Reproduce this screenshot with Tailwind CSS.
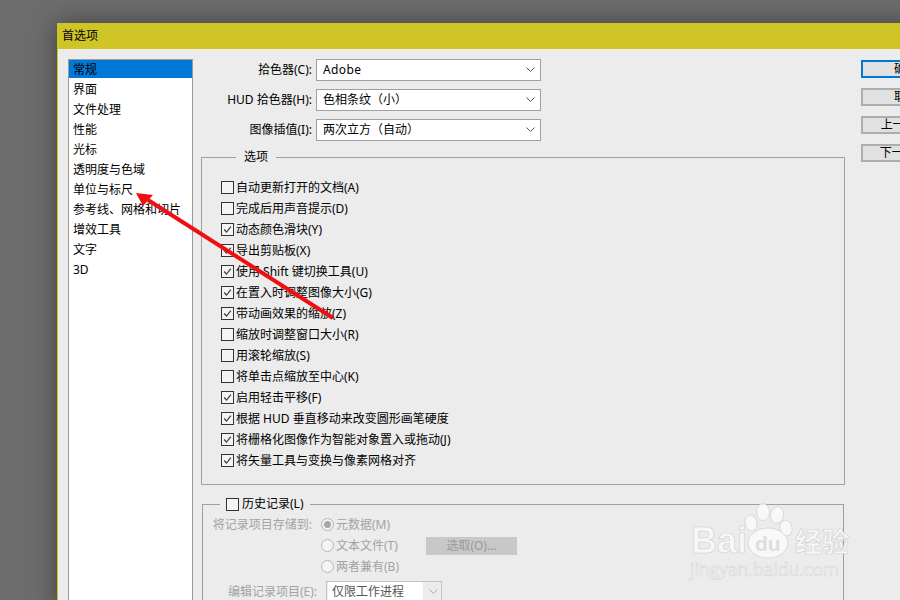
<!DOCTYPE html>
<html lang="zh-CN">
<head>
    <meta charset="UTF-8">
    <title>首选项</title>
    <script src="https://cdn.jsdelivr.net/npm/@tailwindcss/browser@4"></script>
</head>
<body class="relative h-[600px] w-[900px] overflow-hidden bg-[#6c6c6c] pt-[23px] pl-[57px] font-['Noto_Sans','Noto_Sans_CJK_SC',sans-serif] text-[12px] text-black">
    <svg class="hidden">
        <symbol id="check" viewBox="0 0 13 13">
            <path d="M2.5 6.5 L5.3 9.5 L10.5 3" fill="none" stroke="#444" stroke-width="1.5"/>
        </symbol>
    </svg>

    <!-- Dialog -->
    <div class="w-[920px] border-l border-[#cfc527] bg-[#ececec] shadow-[0_0_22px_rgba(0,0,0,0.4)]">
        <div class="flex h-[26px] items-center bg-[#cfc527] pl-[4px] text-[12px]">首选项</div>

        <div class="flex h-[560px] pt-[10px] pl-[10px]">
            <!-- Category list -->
            <ul class="h-[600px] w-[125px] shrink-0 border border-[#9a9a9a] bg-white leading-[20px]">
                <li class="mb-[2px] h-[18px] bg-[#0078d7] pl-[4px]">常规</li>
                <li class="h-[20px] pl-[4px]">界面</li>
                <li class="h-[20px] pl-[4px]">文件处理</li>
                <li class="h-[20px] pl-[4px]">性能</li>
                <li class="h-[20px] pl-[4px]">光标</li>
                <li class="h-[20px] pl-[4px]">透明度与色域</li>
                <li class="h-[20px] pl-[4px]">单位与标尺</li>
                <li class="h-[20px] pl-[4px]">参考线、网格和切片</li>
                <li class="h-[20px] pl-[4px]">增效工具</li>
                <li class="h-[20px] pl-[4px]">文字</li>
                <li class="h-[20px] pl-[4px]">3D</li>
            </ul>

            <!-- Settings -->
            <div class="ml-[8px] w-[644px] shrink-0">
                <div class="flex flex-col gap-[8px]">
                    <div class="flex h-[22px] items-center gap-[4px]">
                        <span class="w-[111px] text-right">拾色器(C):</span>
                        <div class="flex h-[22px] w-[225px] items-center justify-between border border-[#a0a0a0] bg-white pr-[5px] pl-[6px]">
                            <span class="tracking-[0.4px]">Adobe</span>
                            <svg width="9" height="6" viewBox="0 0 9 6"><path d="M0.5 0.5 L4.5 4.5 L8.5 0.5" fill="none" stroke="#555"/></svg>
                        </div>
                    </div>
                    <div class="flex h-[22px] items-center gap-[4px]">
                        <span class="w-[111px] text-right">HUD 拾色器(H):</span>
                        <div class="flex h-[22px] w-[225px] items-center justify-between border border-[#a0a0a0] bg-white pr-[5px] pl-[6px]">
                            <span>色相条纹（小）</span>
                            <svg width="9" height="6" viewBox="0 0 9 6"><path d="M0.5 0.5 L4.5 4.5 L8.5 0.5" fill="none" stroke="#555"/></svg>
                        </div>
                    </div>
                    <div class="flex h-[22px] items-center gap-[4px]">
                        <span class="w-[111px] text-right">图像插值(I):</span>
                        <div class="flex h-[22px] w-[225px] items-center justify-between border border-[#a0a0a0] bg-white pr-[5px] pl-[6px]">
                            <span>两次立方（自动）</span>
                            <svg width="9" height="6" viewBox="0 0 9 6"><path d="M0.5 0.5 L4.5 4.5 L8.5 0.5" fill="none" stroke="#555"/></svg>
                        </div>
                    </div>
                </div>

                <!-- Options -->
                <fieldset class="mt-[7px] border border-[#a0a0a0] pt-[11px] pb-[13px] pl-[19px]">
                    <legend class="ml-[15px] h-[18px] px-[8px] leading-[18px]">选项</legend>
                    <div class="flex h-[21px] items-center gap-[2px]"><span class="h-[13px] w-[13px] border border-[#333] bg-[#f4f4f4]"></span><span>自动更新打开的文档(A)</span></div>
                    <div class="flex h-[21px] items-center gap-[2px]"><span class="h-[13px] w-[13px] border border-[#333] bg-[#f4f4f4]"></span><span>完成后用声音提示(D)</span></div>
                    <div class="flex h-[21px] items-center gap-[2px]"><svg class="h-[13px] w-[13px] border border-[#333] bg-[#f4f4f4]"><use href="#check"/></svg><span>动态颜色滑块(Y)</span></div>
                    <div class="flex h-[21px] items-center gap-[2px]"><svg class="h-[13px] w-[13px] border border-[#333] bg-[#f4f4f4]"><use href="#check"/></svg><span>导出剪贴板(X)</span></div>
                    <div class="flex h-[21px] items-center gap-[2px]"><svg class="h-[13px] w-[13px] border border-[#333] bg-[#f4f4f4]"><use href="#check"/></svg><span>使用 Shift 键切换工具(U)</span></div>
                    <div class="flex h-[21px] items-center gap-[2px]"><svg class="h-[13px] w-[13px] border border-[#333] bg-[#f4f4f4]"><use href="#check"/></svg><span>在置入时调整图像大小(G)</span></div>
                    <div class="flex h-[21px] items-center gap-[2px]"><svg class="h-[13px] w-[13px] border border-[#333] bg-[#f4f4f4]"><use href="#check"/></svg><span>带动画效果的缩放(Z)</span></div>
                    <div class="flex h-[21px] items-center gap-[2px]"><span class="h-[13px] w-[13px] border border-[#333] bg-[#f4f4f4]"></span><span>缩放时调整窗口大小(R)</span></div>
                    <div class="flex h-[21px] items-center gap-[2px]"><span class="h-[13px] w-[13px] border border-[#333] bg-[#f4f4f4]"></span><span>用滚轮缩放(S)</span></div>
                    <div class="flex h-[21px] items-center gap-[2px]"><span class="h-[13px] w-[13px] border border-[#333] bg-[#f4f4f4]"></span><span>将单击点缩放至中心(K)</span></div>
                    <div class="flex h-[21px] items-center gap-[2px]"><svg class="h-[13px] w-[13px] border border-[#333] bg-[#f4f4f4]"><use href="#check"/></svg><span>启用轻击平移(F)</span></div>
                    <div class="flex h-[21px] items-center gap-[2px]"><svg class="h-[13px] w-[13px] border border-[#333] bg-[#f4f4f4]"><use href="#check"/></svg><span>根据 HUD 垂直移动来改变圆形画笔硬度</span></div>
                    <div class="flex h-[21px] items-center gap-[2px]"><svg class="h-[13px] w-[13px] border border-[#333] bg-[#f4f4f4]"><use href="#check"/></svg><span>将栅格化图像作为智能对象置入或拖动(J)</span></div>
                    <div class="flex h-[21px] items-center gap-[2px]"><svg class="h-[13px] w-[13px] border border-[#333] bg-[#f4f4f4]"><use href="#check"/></svg><span>将矢量工具与变换与像素网格对齐</span></div>
                </fieldset>

                <!-- History log -->
                <fieldset class="mt-[10px] ml-[1px] w-[642px] border border-[#a0a0a0] pt-[1px] pl-[1px] text-[#a3a3a3]">
                    <legend class="ml-[16px] flex h-[18px] items-center gap-[3px] px-[6px] text-black">
                        <span class="h-[13px] w-[13px] border border-[#333] bg-[#f4f4f4]"></span><span>历史记录(L)</span>
                    </legend>
                    <div class="flex h-[21px] items-center">
                        <span class="w-[108px] text-right">将记录项目存储到:</span>
                        <span class="ml-[9px] flex h-[13px] w-[13px] items-center justify-center rounded-full border border-[#b5b5b5] bg-[#f4f4f4]"><span class="h-[7px] w-[7px] rounded-full bg-[#a8a8a8]"></span></span>
                        <span class="ml-[2px]">元数据(M)</span>
                    </div>
                    <div class="flex h-[21px] items-center">
                        <span class="w-[108px]"></span>
                        <span class="ml-[9px] h-[13px] w-[13px] rounded-full border border-[#b5b5b5] bg-[#f4f4f4]"></span>
                        <span class="ml-[2px] w-[90px]">文本文件(T)</span>
                        <span class="flex h-[18px] w-[91px] items-center justify-center bg-[#c8c8c8] text-[#9a9a9a]">选取(O)...</span>
                    </div>
                    <div class="flex h-[21px] items-center">
                        <span class="w-[108px]"></span>
                        <span class="ml-[9px] h-[13px] w-[13px] rounded-full border border-[#b5b5b5] bg-[#f4f4f4]"></span>
                        <span class="ml-[2px]">两者兼有(B)</span>
                    </div>
                    <div class="mt-[4px] flex h-[22px] items-center">
                        <span class="w-[113px] text-right">编辑记录项目(E):</span>
                        <div class="ml-[9px] flex h-[22px] w-[116px] items-center border border-[#c4c4c4] pl-[1px]">
                            <span class="h-[20px] w-[95px] bg-white pl-[4px] leading-[20px] text-[#555]">仅限工作进程</span>
                            <svg class="ml-[6px]" width="9" height="6" viewBox="0 0 9 6"><path d="M0.5 0.5 L4.5 4.5 L8.5 0.5" fill="none" stroke="#aaa"/></svg>
                        </div>
                    </div>
                </fieldset>
            </div>

            <!-- Dialog buttons -->
            <div class="ml-[16px] flex w-[90px] shrink-0 flex-col gap-[10px] pt-[1px]">
                <button class="h-[18px] border-2 border-[#0078d7] bg-[#e1e1e1] leading-none">确定</button>
                <button class="h-[18px] border-2 border-[#adadad] bg-[#e1e1e1] leading-none">取消</button>
                <button class="h-[18px] border-2 border-[#adadad] bg-[#e1e1e1] leading-none">上一个(P)</button>
                <button class="h-[18px] border-2 border-[#adadad] bg-[#e1e1e1] leading-none">下一个(N)</button>
            </div>
        </div>
    </div>

    <!-- Watermark -->
    <svg class="pointer-events-none absolute top-0 left-0" width="900" height="600" viewBox="0 0 900 600">
        <g fill="#fafafa" fill-opacity="0.85" stroke="#cfcfcf" stroke-width="0.7">
            <ellipse cx="763" cy="512" rx="6.5" ry="8.5"/>
            <ellipse cx="777" cy="515" rx="6.5" ry="8.5" transform="rotate(12 777 515)"/>
            <ellipse cx="751" cy="523" rx="6" ry="8" transform="rotate(-10 751 523)"/>
            <ellipse cx="786" cy="528" rx="6" ry="8" transform="rotate(-15 786 528)"/>
            <ellipse cx="768" cy="543" rx="20" ry="15"/>
            <text x="691" y="553" font-family="Liberation Sans" font-size="36" font-weight="700" stroke-width="0.6">Bai</text>
            <text x="795" y="552" font-family="Noto Sans CJK SC" font-size="27" font-weight="700" stroke-width="0.6">经验</text>
            <text x="690" y="576" font-family="Open Sans" font-size="17.5" stroke-width="0.5">jingyan.baidu.com</text>
        </g>
        <text x="755" y="551" fill="#dedede" font-family="Liberation Sans" font-size="21" font-weight="700">du</text>

        <!-- Red annotation arrow -->
        <path d="M333 318 L148 200" stroke="#ef0f12" stroke-width="4" fill="none"/>
        <path d="M136 193 L153 195 L143 206 Z" fill="#ef0f12"/>
    </svg>
</body>
</html>
